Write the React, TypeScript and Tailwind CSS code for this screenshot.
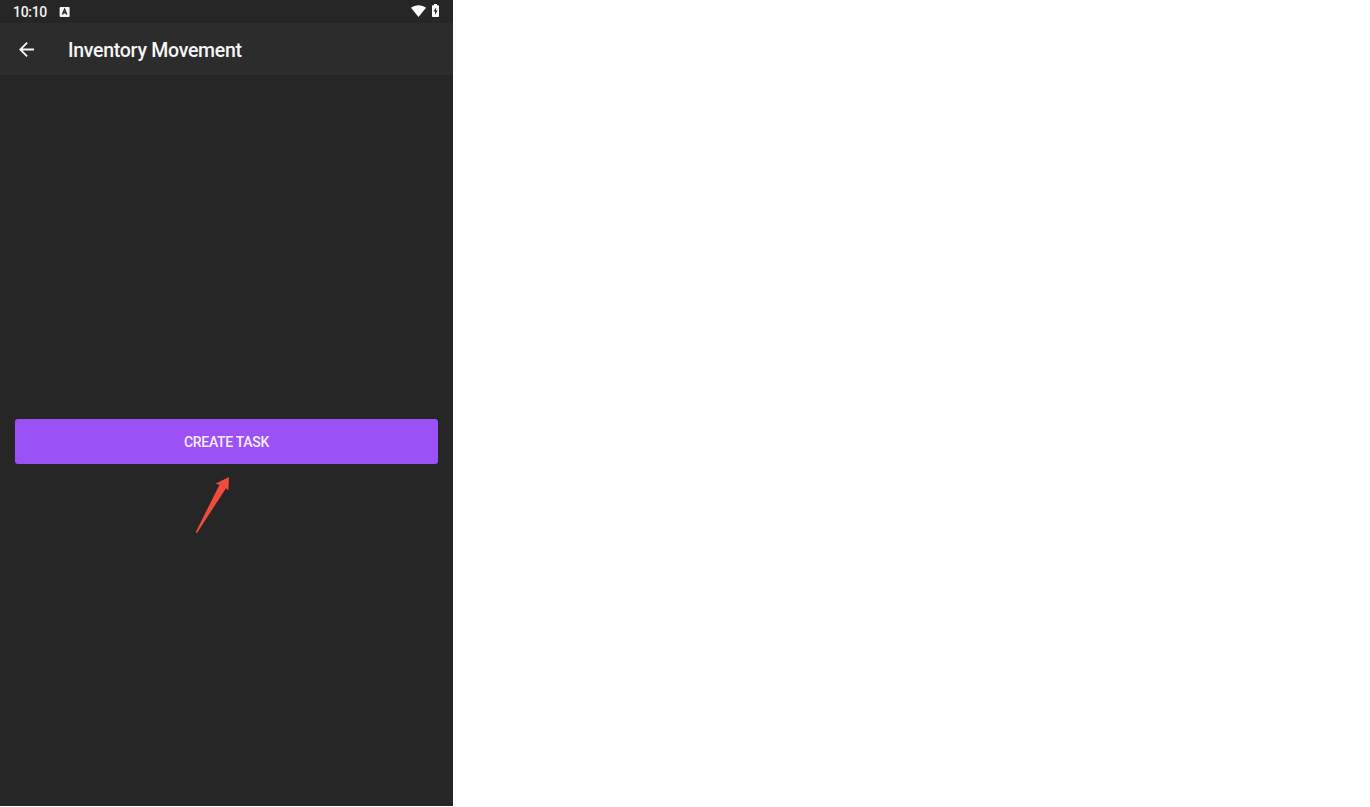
import React from 'react';

const StatusBar: React.FC = () => {
  return (
    <div className="h-[23px] flex items-center justify-between pl-[13px] pr-[14px] bg-[#262626]">
      <div className="flex items-center gap-[12px]">
        <span className="w-[34px] pt-px text-[14px] leading-[22px] font-medium tracking-[-0.3px] whitespace-nowrap text-[#f2f2f2]">10:10</span>
        <svg width="11" height="10" viewBox="0 0 11 10">
          <rect x=".6" width="10" height="10" rx="1" fill="#f5f5f5" />
          <path d="M3.4 7.5 5.6 2.3l2.2 5.2M4.2 5.8H7" fill="none" stroke="#262626" strokeWidth="1.4" />
        </svg>
      </div>
      <div className="flex items-center gap-[6px] -mt-[2px]">
        <svg width="15" height="12" viewBox="0 0 15 12">
          <path d="M0 2.8C4.2-.6 10.8-.6 15 2.8L7.5 12Z" fill="#fff" />
        </svg>
        <svg width="7" height="13" viewBox="0 0 7 13">
          <path d="M2 0h3v1.2h1.2q.8 0 .8.8v10.2q0 .8-.8.8H.8q-.8 0-.8-.8V2q0-.8.8-.8H2Z" fill="#fff" />
          <path d="M4.1 3.4 1.5 7.5h1.6v3.2l2.5-4.3H4.1Z" fill="#262626" />
        </svg>
      </div>
    </div>
  );
};

const AppBar: React.FC = () => {
  return (
    <header className="h-[52px] flex items-center pl-[19px] bg-[#2c2c2c]">
      <button aria-label="Back" className="w-[49px]">
        <svg width="15" height="15" viewBox="4 4 16 16" fill="#f5f5f5">
          <path d="M20 11H7.83l5.59-5.59L12 4l-8 8 8 8 1.41-1.41L7.83 13H20v-2z" />
        </svg>
      </button>
      <h1 className="pt-[3px] text-[19.5px] leading-[28px] font-medium tracking-[-0.28px] whitespace-nowrap text-[#f5f5f5]">Inventory Movement</h1>
    </header>
  );
};

export default function App() {
  return (
    <div className="h-[807px] bg-white font-[Roboto,sans-serif]">
      <div className="relative w-[453px] h-[806px] flex flex-col bg-[#262626]">
        <StatusBar />
        <AppBar />
        <main className="flex-1 flex flex-col justify-center px-[15px] pt-px">
          <button className="h-[45px] w-full rounded-[3px] bg-[#9b51f5] pt-[2px] text-[14px] font-medium tracking-[-0.3px] text-[#f5edff]">
            CREATE TASK
          </button>
        </main>

        {/* Pointer to the create button */}
        <svg className="absolute left-[195px] top-[476px]" width="36" height="58" viewBox="0 0 36 58">
          <path d="M34 1 20.5 7.8l4 1L.7 56.2l1.3.8L31 12.2l2.4 2.3Z" fill="#f04b3c" />
        </svg>
      </div>
    </div>
  );
}
